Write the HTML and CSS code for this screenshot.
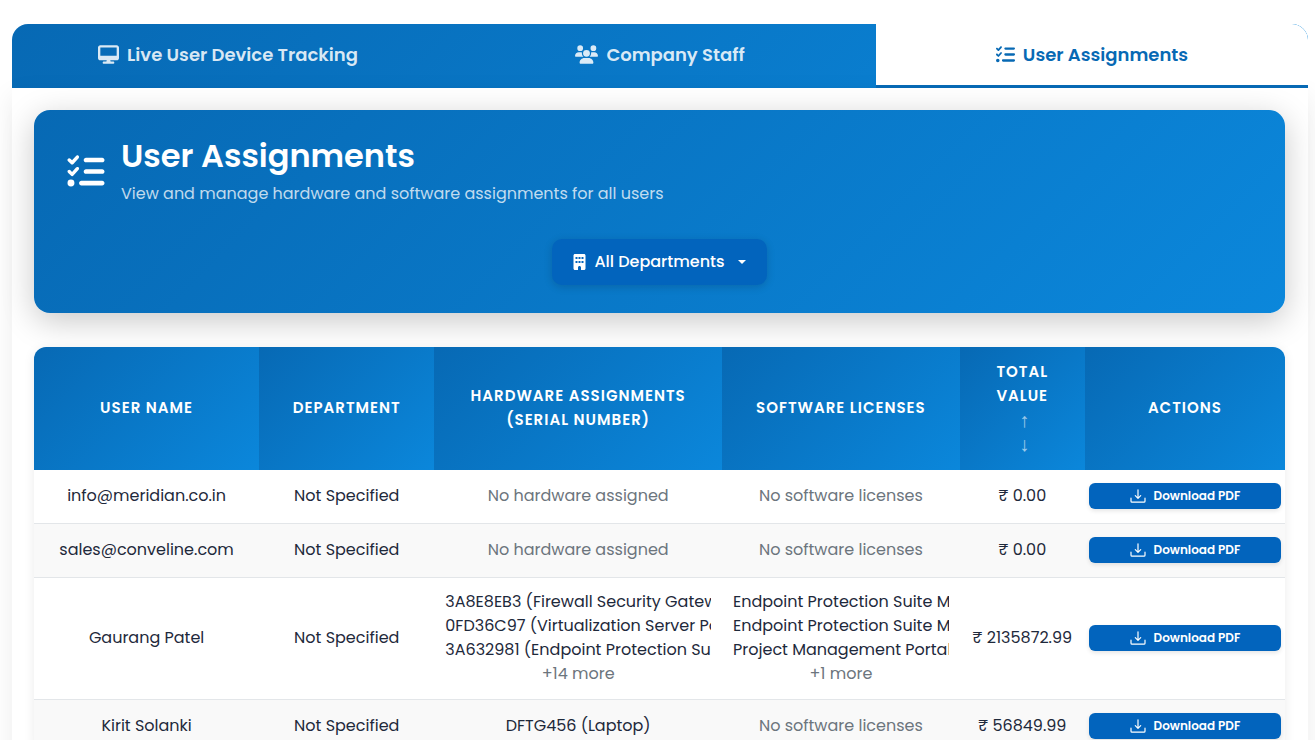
FILE: index.html
```html
<!DOCTYPE html>
<html lang="en">
<head>
<meta charset="utf-8">
<meta name="viewport" content="width=device-width, initial-scale=1">
<title>User Assignments</title>
<link rel="stylesheet" href="styles.css">
</head>
<body>
<svg class="sprite" aria-hidden="true">
  <symbol id="i-list" viewBox="0 0 512 512"><path d="M152.100 38.200c9.900 8.900 10.700 24 1.800 33.900l-72 80c-4.400 4.900-10.600 7.800-17.200 7.900s-12.900-2.400-17.600-7L7 113C-2.300 103.600-2.300 88.400 7 79s24.600-9.400 33.900 0l22.100 22.100 55.100-61.200c8.900-9.900 24-10.700 33.900-1.800zm0 160c9.900 8.900 10.700 24 1.800 33.900l-72 80c-4.400 4.900-10.600 7.800-17.200 7.900s-12.900-2.400-17.600-7L7 273c-9.400-9.400-9.400-24.600 0-33.900s24.600-9.400 33.900 0l22.100 22.100 55.100-61.200c8.900-9.900 24-10.700 33.900-1.800zM224 96c0-17.700 14.300-32 32-32H480c17.700 0 32 14.300 32 32s-14.300 32-32 32H256c-17.700 0-32-14.300-32-32zm0 160c0-17.700 14.300-32 32-32H480c17.700 0 32 14.300 32 32s-14.300 32-32 32H256c-17.700 0-32-14.300-32-32zM160 416c0-17.700 14.300-32 32-32H480c17.700 0 32 14.300 32 32s-14.300 32-32 32H192c-17.700 0-32-14.300-32-32zM48 368a48 48 0 1 1 0 96 48 48 0 1 1 0-96z"/></symbol>
  <symbol id="i-desktop" viewBox="0 0 576 512"><path d="M64 0C28.700 0 0 28.700 0 64V352c0 35.300 28.700 64 64 64H240l-10.700 32H160c-17.700 0-32 14.300-32 32s14.300 32 32 32H416c17.700 0 32-14.300 32-32s-14.300-32-32-32H346.700L336 416H512c35.300 0 64-28.700 64-64V64c0-35.300-28.700-64-64-64H64zM512 64V288H64V64H512z"/></symbol>
  <symbol id="i-users" viewBox="0 0 640 512"><path d="M144 0a80 80 0 1 1 0 160A80 80 0 1 1 144 0zM512 0a80 80 0 1 1 0 160A80 80 0 1 1 512 0zM0 298.700C0 239.800 47.800 192 106.700 192h42.700c15.900 0 31 3.500 44.600 9.700c-1.300 7.200-1.900 14.700-1.900 22.300c0 38.200 16.800 72.500 43.300 96H21.300C9.600 320 0 310.400 0 298.700zM404.600 320c26.600-23.500 43.300-57.800 43.300-96c0-7.600-.7-15-1.900-22.300c13.600-6.300 28.700-9.700 44.600-9.700h42.700C592.200 192 640 239.800 640 298.700c0 11.800-9.600 21.300-21.300 21.300H404.600zM224 224a96 96 0 1 1 192 0 96 96 0 1 1 -192 0zM128 485.300C128 411.700 187.700 352 261.300 352H378.700C452.300 352 512 411.700 512 485.300c0 14.700-11.900 26.700-26.700 26.700H154.700c-14.700 0-26.700-11.900-26.700-26.700z"/></symbol>
  <symbol id="i-building" viewBox="0 0 384 512"><path fill-rule="evenodd" d="M48 0C21.500 0 0 21.500 0 48V464c0 26.500 21.500 48 48 48h96V432c0-26.500 21.500-48 48-48s48 21.500 48 48v80h96c26.500 0 48-21.500 48-48V48c0-26.500-21.500-48-48-48H48zM64 96h64v64H64zM160 96h64v64h-64zM256 96h64v64h-64zM64 224h64v64H64zM160 224h64v64h-64zM256 224h64v64h-64z"/></symbol>
  <symbol id="i-caret" viewBox="0 0 8 4"><path d="M0 0h8L4 4z"/></symbol>
  <symbol id="i-download" viewBox="0 0 16 14"><path fill="none" stroke="currentColor" stroke-width="1.200" stroke-linecap="round" stroke-linejoin="round" d="M8 .8v8.400M5.300 6.600L8 9.300l2.700-2.700M1 9.200v3q0 1 1 1h12q1 0 1-1v-3"/></symbol>
</svg>

<main class="page">
  <nav class="tabs">
    <button class="tab" type="button"><svg class="icon icon-desktop"><use href="#i-desktop"/></svg>Live User Device Tracking</button>
    <button class="tab" type="button"><svg class="icon icon-users"><use href="#i-users"/></svg>Company Staff</button>
    <button class="tab tab-active" type="button" aria-current="page"><svg class="icon icon-list"><use href="#i-list"/></svg>User Assignments</button>
  </nav>

  <section class="panel">
    <header class="hero">
      <div class="hero-head">
        <svg class="icon hero-icon"><use href="#i-list"/></svg>
        <div>
          <h1 class="hero-title">User Assignments</h1>
          <p class="hero-text">View and manage hardware and software assignments for all users</p>
        </div>
      </div>
      <button class="filter" type="button" aria-haspopup="true"><svg class="icon icon-building"><use href="#i-building"/></svg>All Departments<svg class="icon icon-caret"><use href="#i-caret"/></svg></button>
    </header>

    <div class="table-card">
      <table class="grid">
        <colgroup><col class="c-user"><col class="c-dept"><col class="c-hard"><col class="c-soft"><col class="c-total"><col class="c-act"></colgroup>
        <thead>
          <tr>
            <th scope="col">User Name</th>
            <th scope="col">Department</th>
            <th scope="col">Hardware Assignments<br>(Serial Number)</th>
            <th scope="col">Software Licenses</th>
            <th scope="col">Total<br>Value<span class="sort">↑</span><span class="sort">↓</span></th>
            <th scope="col">Actions</th>
          </tr>
        </thead>
        <tbody>
          <tr>
            <td>info@meridian.co.in</td><td>Not Specified</td>
            <td class="muted">No hardware assigned</td><td class="muted">No software licenses</td><td class="tight">₹ 0.00</td>
            <td class="tight"><button class="download" type="button"><svg class="icon icon-download"><use href="#i-download"/></svg>Download PDF</button></td>
          </tr>
          <tr>
            <td>sales@conveline.com</td><td>Not Specified</td>
            <td class="muted">No hardware assigned</td><td class="muted">No software licenses</td><td class="tight">₹ 0.00</td>
            <td class="tight"><button class="download" type="button"><svg class="icon icon-download"><use href="#i-download"/></svg>Download PDF</button></td>
          </tr>
          <tr>
            <td>Gaurang Patel</td><td>Not Specified</td>
            <td><div class="line">3A8E8EB3 (Firewall Security Gatew</div><div class="line">0FD36C97 (Virtualization Server Po</div><div class="line">3A632981 (Endpoint Protection Sui</div><div class="muted">+14 more</div></td>
            <td><div class="line">Endpoint Protection Suite Mo</div><div class="line">Endpoint Protection Suite Mo</div><div class="line">Project Management Portal</div><div class="muted">+1 more</div></td>
            <td class="tight">₹ 2135872.99</td>
            <td class="tight"><button class="download" type="button"><svg class="icon icon-download"><use href="#i-download"/></svg>Download PDF</button></td>
          </tr>
          <tr>
            <td>Kirit Solanki</td><td>Not Specified</td>
            <td>DFTG456 (Laptop)</td><td class="muted">No software licenses</td><td class="tight">₹ 56849.99</td>
            <td class="tight"><button class="download" type="button"><svg class="icon icon-download"><use href="#i-download"/></svg>Download PDF</button></td>
          </tr>
        </tbody>
      </table>
    </div>
  </section>
</main>
</body>
</html>
```
FILE: styles.css
```css
:root {
  --blue-dark: #0769b4;
  --blue-light: #0b87db;
  --blue-solid: #0264bd;
  --ink: #1e293b;
  --muted: #6c757d;
  --fade: linear-gradient(135deg, var(--blue-dark), var(--blue-light));
}

* { box-sizing: border-box; }

body {
  margin: 0;
  background: #fff;
  color: var(--ink);
  font-family: Poppins, Inter, "Open Sans", sans-serif;
  font-size: 16px;
  line-height: 24px;
}

button { font: inherit; border: 0; cursor: pointer; }

.sprite { position: absolute; width: 0; height: 0; }
.icon { fill: currentColor; flex: none; }

.page { padding: 24px 7px 0 12px; }

.tabs {
  display: grid;
  grid-template-columns: repeat(3, 1fr);
  border-radius: 16px 16px 0 0;
  background: var(--fade);
  overflow: hidden;
}

.tab {
  display: flex;
  align-items: center;
  justify-content: center;
  gap: 8px;
  height: 64px;
  padding: 0 16px 3px;
  background: none;
  color: rgba(255, 255, 255, .85);
  font-size: 18px;
  font-weight: 600;
}

.tab-active {
  padding-bottom: 0;
  border-bottom: 3px solid var(--blue-dark);
  border-radius: 0 16px 0 0;
  background: #fff;
  color: var(--blue-dark);
}

.icon-desktop { width: 21px; height: 19px; }
.icon-users { width: 23px; height: 19px; }
.icon-list { width: 19px; height: 19px; }

.panel {
  display: flex;
  flex-direction: column;
  gap: 34px;
  padding: 22px 23px 22px 22px;
  box-shadow: 0 8px 24px rgba(0, 0, 0, .08);
}

.hero {
  display: flex;
  flex-direction: column;
  align-items: center;
  gap: 33px;
  padding: 26px 32px 28px;
  border-radius: 16px;
  background: var(--fade);
  box-shadow: 0 8px 32px rgba(0, 0, 0, .22);
  color: #fff;
}

.hero-head { display: flex; align-items: center; gap: 15px; width: 100%; }
.hero-icon { width: 40px; height: 37px; }
.hero-title { margin: 0; font-size: 32px; font-weight: 600; line-height: 40px; }
.hero-text { margin: 6px 0 0; color: rgba(255, 255, 255, .75); }

.filter {
  display: flex;
  align-items: center;
  gap: 8px;
  height: 46px;
  padding: 0 21px;
  border-radius: 10px;
  background: var(--blue-solid);
  box-shadow: 0 2px 8px rgba(0, 0, 0, .15);
  color: #fff;
  font-weight: 500;
}

.icon-building { width: 13px; height: 16px; }
.icon-caret { width: 8px; height: 4px; margin-left: 5px; }

.table-card {
  border-radius: 12px;
  box-shadow: 0 2px 12px rgba(0, 0, 0, .08);
  overflow: hidden;
}

.grid { width: 100%; table-layout: fixed; border-collapse: separate; border-spacing: 0; }
.c-user { width: 18%; }
.c-dept { width: 14%; }
.c-hard { width: 23%; }
.c-soft { width: 19%; }
.c-total { width: 10%; }
.c-act { width: 16%; }

.grid th {
  height: 123px;
  padding: 12px 8px 14px;
  background: var(--fade);
  color: #fff;
  font-size: 15px;
  font-weight: 600;
  letter-spacing: 1px;
  text-transform: uppercase;
}

.sort {
  display: block;
  padding-left: 5px;
  font-family: "Liberation Sans", sans-serif;
  font-size: 20px;
  font-weight: 400;
  opacity: .6;
}

.grid td {
  height: 54px;
  padding: 12px 11px 13px;
  border-bottom: 1px solid #e3e6e9;
  background: #fff;
  text-align: center;
  vertical-align: middle;
}

.grid tbody tr:nth-child(even) td { background: #f9f9f9; }
.grid td.tight { padding: 12px 4px 13px; white-space: nowrap; }
.grid .muted { color: var(--muted); }
.line { overflow: hidden; white-space: nowrap; }

.download {
  display: flex;
  align-items: center;
  justify-content: center;
  gap: 8px;
  width: 100%;
  height: 26px;
  border-radius: 6px;
  background: var(--blue-solid);
  box-shadow: 0 2px 4px rgba(0, 0, 0, .1);
  color: #fff;
  font-size: 12px;
  font-weight: 600;
}

.icon-download { width: 16px; height: 14px; }
```
